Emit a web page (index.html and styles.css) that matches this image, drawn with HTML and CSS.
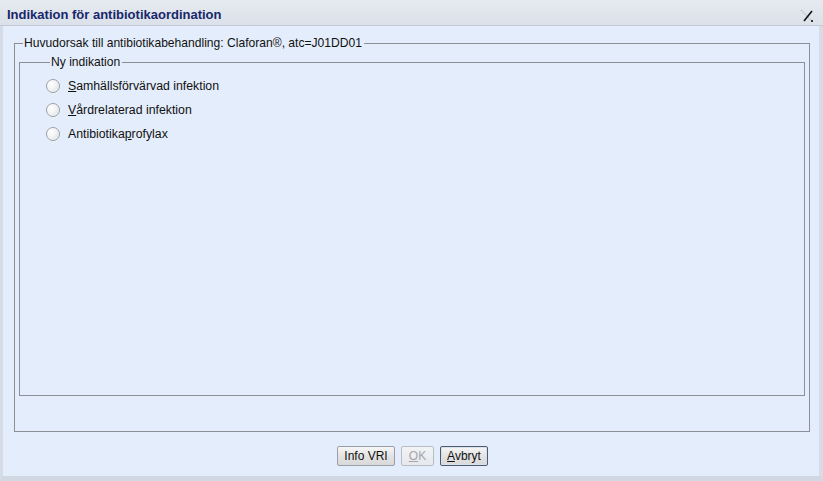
FILE: index.html
```html
<!DOCTYPE html>
<html lang="sv">
<head>
<meta charset="utf-8">
<title>Indikation för antibiotikaordination</title>
<link rel="stylesheet" href="styles.css">
</head>
<body>
<div class="window">
  <div class="titlebar">
    <span class="title">Indikation för antibiotikaordination</span>
    <svg class="close" width="14" height="14" viewBox="0 0 14 14">
      <line x1="1" y1="1" x2="12" y2="12" stroke="#b8bcc4" stroke-width="1.2" stroke-dasharray="1.5 1"/>
      <line x1="12" y1="2" x2="4" y2="12" stroke="#111" stroke-width="1.6"/>
      <rect x="11" y="11" width="2" height="2" fill="#333"/>
    </svg>
  </div>
  <div class="body">
    <fieldset class="group outer">
      <legend>Huvudorsak till antibiotikabehandling: Claforan®, atc=J01DD01</legend>
      <fieldset class="group inner">
        <legend>Ny indikation</legend>
        <div class="options">
          <label class="option"><span class="radio"></span><span><u>S</u>amhällsförvärvad infektion</span></label>
          <label class="option"><span class="radio"></span><span><u>V</u>årdrelaterad infektion</span></label>
          <label class="option"><span class="radio"></span><span>Antibiotika<u>p</u>rofylax</span></label>
        </div>
      </fieldset>
    </fieldset>
    <div class="buttons">
      <button class="btn btn-info">Info VRI</button>
      <button class="btn btn-ok" disabled><u>O</u>K</button>
      <button class="btn btn-cancel"><u>A</u>vbryt</button>
    </div>
  </div>
</div>
</body>
</html>
```

FILE: styles.css
```css
html, body {
  margin: 0;
  padding: 0;
}
body {
  width: 823px;
  height: 481px;
  overflow: hidden;
  font-family: "Liberation Sans", Arial, sans-serif;
  font-size: 12px;
  color: #111;
  background: #e4edfb;
}
.window {
  display: flex;
  flex-direction: column;
  height: 481px;
}
.titlebar {
  height: 26px;
  box-sizing: border-box;
  display: flex;
  align-items: center;
  justify-content: space-between;
  padding: 0 9px 0 7px;
  background: linear-gradient(#e6eaf0, #dbe1ea);
  border-bottom: 1px solid #c3cad5;
}
.title {
  font-weight: bold;
  font-size: 13px;
  color: #17276a;
  padding-top: 3px;
}
.close {
  margin-top: 6px;
}
.body {
  flex: 1;
  display: flex;
  flex-direction: column;
  background: #e4edfb;
  border-left: 3px solid #d6dce6;
  border-right: 4px solid #d6dce6;
  border-bottom: 5px solid #d2d8e1;
  padding: 10px 9px 0 11px;
}
.group {
  margin: 0;
  border: 1px solid #8b8f97;
  padding: 0;
  min-width: 0;
}
.group legend {
  padding: 0 2px 0 1px;
  margin-left: 4px;
  line-height: 14px;
  font-size: 12.1px;
  color: #111;
}
.outer {
  flex: 1;
  display: flex;
  flex-direction: column;
  padding: 5px 4px 35px 4px;
}
.inner {
  flex: 1;
  padding: 5px 0 0 26px;
}
.options {
  display: flex;
  flex-direction: column;
  font-size: 12.3px;
}
.option {
  display: flex;
  align-items: center;
  height: 24px;
  gap: 8px;
}
.radio {
  width: 12px;
  height: 12px;
  border-radius: 50%;
  border: 1px solid #9c9fa4;
  background: radial-gradient(circle at 35% 35%, #ffffff 0%, #f1f2f4 45%, #d5d8dc 100%);
  box-shadow: inset 0 0 0 1px rgba(255,255,255,0.5);
}
.buttons {
  display: flex;
  justify-content: center;
  gap: 6px;
  margin: 14px 0 10px 0;
  height: 20px;
  padding-left: 1px;
}
.btn {
  height: 20px;
  box-sizing: border-box;
  padding: 0;
  font-family: "Liberation Sans", Arial, sans-serif;
  font-size: 12px;
  color: #111;
  border: 1px solid #9a9ea5;
  border-radius: 2px;
  background: linear-gradient(#f6f6f6, #e3e3e3 50%, #d9d9d9);
}
.btn-info { width: 58px; }
.btn-ok {
  width: 33px;
  color: #a3a6ab;
  border-color: #b9bdc3;
  background: linear-gradient(#f2f3f5, #e6e8ec);
}
.btn-cancel {
  width: 48px;
  border-color: #56595f;
  box-shadow: inset 0 0 0 1px #cfe3f7;
}
```
